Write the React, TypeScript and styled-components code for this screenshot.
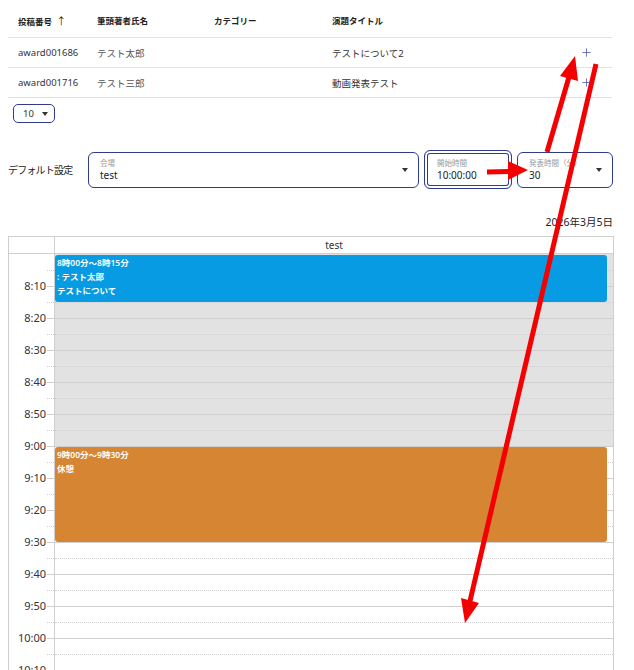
import styled, { createGlobalStyle, css } from 'styled-components';
import { Plus } from 'lucide-react';

const NAVY = '#2f3b8f';
const LINE = '#cfcfcf';

const GlobalStyle = createGlobalStyle`
  html, body {
    margin: 0;
    padding: 0;
    background: #fff;
    overflow: hidden;
  }
  body {
    font-family: "Noto Sans", "Noto Sans CJK JP", sans-serif;
    color: #222;
  }
`;

const rows = [
  { id: 'award001686', author: 'テスト太郎', category: '', title: 'テストについて2' },
  { id: 'award001716', author: 'テスト三郎', category: '', title: '動画発表テスト' },
];

const pad = (n: number) => String(n).padStart(2, '0');
const slotTime = (k: number) => {
  const total = 8 * 60 + k * 5;
  return `${Math.floor(total / 60)}:${pad(total % 60)}`;
};

const SLOT_H = 16;
const slots = Array.from({ length: 28 }, (_, k) => k);

const events = [
  {
    start: 0,
    span: 3,
    color: '#069be3',
    lines: ['8時00分〜8時15分', ': テスト太郎', 'テストについて'],
  },
  {
    start: 12,
    span: 6,
    color: '#d68533',
    lines: ['9時00分〜9時30分', '休憩'],
  },
];

export default function App() {
  return (
    <>
      <GlobalStyle />
      <Page>
        <Table>
          <colgroup>
            <col style={{ width: 79 }} />
            <col style={{ width: 117 }} />
            <col style={{ width: 118 }} />
            <col style={{ width: 248 }} />
            <col style={{ width: 42 }} />
          </colgroup>
          <thead>
            <tr>
              <Th>投稿番号 <SortArrow>↑</SortArrow></Th>
              <Th>筆頭著者氏名</Th>
              <Th>カテゴリー</Th>
              <Th>演題タイトル</Th>
              <Th />
            </tr>
          </thead>
          <tbody>
            {rows.map((r) => (
              <tr key={r.id}>
                <Td>{r.id}</Td>
                <Td $muted>{r.author}</Td>
                <Td>{r.category}</Td>
                <Td>{r.title}</Td>
                <Td>
                  <Plus size={13} strokeWidth={1.4} color="#3f51b5" />
                </Td>
              </tr>
            ))}
          </tbody>
        </Table>

        <Pager>
          10 <Caret />
        </Pager>

        <Settings>
          <SettingsLabel>デフォルト設定</SettingsLabel>
          <Field $width={331}>
            <FieldBody>
              <FieldLabel>会場</FieldLabel>
              <FieldValue>test</FieldValue>
            </FieldBody>
            <Caret />
          </Field>
          <Field $width={88} $focused>
            <FieldBody>
              <FieldLabel>開始時間</FieldLabel>
              <FieldValue>10:00:00</FieldValue>
            </FieldBody>
          </Field>
          <Field $width={96}>
            <FieldBody>
              <FieldLabel>発表時間（分）</FieldLabel>
              <FieldValue>30</FieldValue>
            </FieldBody>
            <Caret />
          </Field>
        </Settings>

        <DateLine>2026年3月5日</DateLine>

        <Calendar>
          <CalHeader>
            <TimeHead />
            <RoomHead>test</RoomHead>
          </CalHeader>
          <CalBody>
            <TimeColumn>
              {slots.map((k) => (
                <TimeCell key={k}>
                  {k > 0 && k % 2 === 0 && <TimeLabel>{slotTime(k)}</TimeLabel>}
                  <Tick $k={k} />
                </TimeCell>
              ))}
            </TimeColumn>
            <RoomColumn>
              {slots.map((k) => (
                <Slot key={k} $k={k} $closed={k < 12} />
              ))}
              {events.map((e) => (
                <EventBox
                  key={e.start}
                  $color={e.color}
                  style={{ top: e.start * SLOT_H + 1, height: e.span * SLOT_H - 1 }}
                >
                  {e.lines.map((l) => (
                    <div key={l}>{l}</div>
                  ))}
                </EventBox>
              ))}
            </RoomColumn>
          </CalBody>
        </Calendar>

        <Arrows width="634" height="670" viewBox="0 0 634 670">
          <g fill="#f40000" stroke="#f40000">
            <line x1="547" y1="152" x2="569" y2="77" strokeWidth="5" />
            <polygon points="575,56 578,81 560,76" stroke="none" />
            <line x1="596" y1="64" x2="470" y2="601" strokeWidth="5" />
            <polygon points="465,623 479,603 461,598" stroke="none" />
            <line x1="487" y1="172" x2="509" y2="171.5" strokeWidth="5" />
            <polygon points="528,170 508,161 508,180" stroke="none" />
          </g>
        </Arrows>
      </Page>
    </>
  );
}

const Page = styled.div`
  position: relative;
  width: 634px;
  height: 670px;
  box-sizing: border-box;
  padding: 3px 21px 0 8px;
  overflow: hidden;
`;

const Table = styled.table`
  width: 604px;
  border-collapse: collapse;
  table-layout: fixed;
`;

const Th = styled.th`
  height: 34px;
  padding: 0 0 0 10px;
  text-align: left;
  font-size: 8.5px;
  font-weight: 700;
  color: #222;
  border-bottom: 1px solid #e3e3e3;
  white-space: nowrap;
`;

const SortArrow = styled.span`
  font-weight: 400;
  font-size: 10px;
  margin-left: 2px;
`;

const Td = styled.td<{ $muted?: boolean }>`
  height: 29px;
  padding: 0 0 0 10px;
  font-size: 9.5px;
  color: ${(p) => (p.$muted ? '#555' : '#333')};
  border-bottom: 1px solid #e3e3e3;
  white-space: nowrap;
  svg {
    display: block;
  }
`;

const Caret = styled.span`
  display: inline-block;
  width: 0;
  height: 0;
  border-left: 3.5px solid transparent;
  border-right: 3.5px solid transparent;
  border-top: 4px solid #333;
  flex-shrink: 0;
`;

const Pager = styled.div`
  margin: 6px 0 0 5px;
  width: 42px;
  height: 19px;
  box-sizing: border-box;
  border: 1px solid ${NAVY};
  border-radius: 5px;
  display: flex;
  align-items: center;
  gap: 8px;
  padding-left: 9px;
  font-size: 9.5px;
  color: #333;
`;

const Settings = styled.div`
  margin-top: 27px;
  display: flex;
  align-items: center;
  gap: 5px;
`;

const SettingsLabel = styled.div`
  width: 75px;
  font-size: 10px;
  letter-spacing: -0.8px;
  color: #222;
  white-space: nowrap;
`;

const Field = styled.div<{ $width: number; $focused?: boolean }>`
  width: ${(p) => p.$width}px;
  height: 36px;
  box-sizing: border-box;
  border: 1px solid ${NAVY};
  border-radius: 6px;
  display: flex;
  align-items: center;
  padding: 0 10px 0 11px;
  ${(p) =>
    p.$focused &&
    css`
      height: 39px;
      padding-left: 12px;
      box-shadow: inset 0 0 0 2px #fff, inset 0 0 0 3px ${NAVY};
    `}
`;

const FieldBody = styled.div`
  flex: 1;
  display: flex;
  flex-direction: column;
  min-width: 0;
`;

const FieldLabel = styled.span`
  font-size: 7.5px;
  color: #999;
  line-height: 11px;
  white-space: nowrap;
`;

const FieldValue = styled.span`
  font-size: 10px;
  color: #222;
  line-height: 13px;
`;

const DateLine = styled.div`
  margin-top: 26px;
  width: 605px;
  text-align: right;
  font-size: 10.5px;
  line-height: 14px;
  color: #222;
`;

const Calendar = styled.div`
  margin-top: 7px;
  width: 606px;
  box-sizing: border-box;
  border: 1px solid ${LINE};
  border-bottom: none;
`;

const CalHeader = styled.div`
  display: grid;
  grid-template-columns: 46px 1fr;
  height: 17px;
  box-sizing: border-box;
  border-bottom: 1px solid ${LINE};
`;

const TimeHead = styled.div`
  border-right: 1px solid ${LINE};
`;

const RoomHead = styled.div`
  font-size: 10px;
  color: #333;
  text-align: center;
  line-height: 16px;
`;

const CalBody = styled.div`
  display: grid;
  grid-template-columns: 46px 1fr;
`;

const TimeColumn = styled.div`
  border-right: 1px solid ${LINE};
`;

const slotBorder = (k: number) =>
  k === 0 ? 'none' : `1px ${k % 2 === 0 ? 'solid' : 'dotted'} ${LINE}`;

const TimeCell = styled.div`
  height: ${SLOT_H}px;
  display: flex;
  justify-content: flex-end;
  align-items: flex-start;
`;

const TimeLabel = styled.span`
  font-size: 11px;
  color: #333;
  line-height: 14px;
  margin-right: 1px;
  transform: translateY(-50%);
  white-space: nowrap;
`;

const Tick = styled.div<{ $k: number }>`
  width: 7px;
  height: 100%;
  box-sizing: border-box;
  border-top: ${(p) => slotBorder(p.$k)};
`;

const RoomColumn = styled.div`
  position: relative;
`;

const Slot = styled.div<{ $k: number; $closed: boolean }>`
  height: ${SLOT_H}px;
  box-sizing: border-box;
  border-top: ${(p) => slotBorder(p.$k)};
  background: ${(p) => (p.$closed ? '#e2e2e2' : '#fff')};
`;

const EventBox = styled.div<{ $color: string }>`
  position: absolute;
  left: 0;
  right: 6px;
  box-sizing: border-box;
  padding: 1px 2px;
  border-radius: 3px;
  background: ${(p) => p.$color};
  color: #fdfdfd;
  font-size: 8.5px;
  font-weight: 600;
  line-height: 14px;
  white-space: nowrap;
  overflow: hidden;
`;

const Arrows = styled.svg`
  position: absolute;
  top: 0;
  left: 0;
  pointer-events: none;
`;
